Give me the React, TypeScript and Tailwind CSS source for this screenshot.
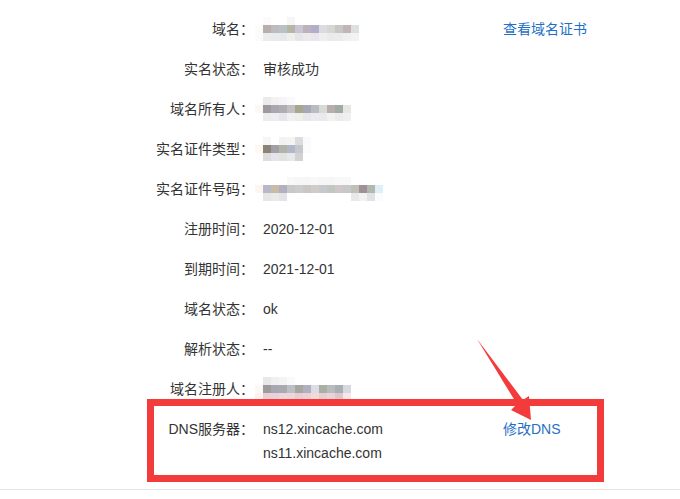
import type { ReactNode } from 'react'

// 打码块：每格 8x8，颜色按截图取样
function Mosaic({ grid }: { grid: string[][] }) {
  return (
    <div className="flex flex-col -ml-2">
      {grid.map((row, i) => (
        <div key={i} className="flex">
          {row.map((c, j) => (
            <div key={j} className="w-2 h-2" style={{ backgroundColor: c }} />
          ))}
        </div>
      ))}
    </div>
  )
}

const W = '#ffffff'

const ownerGrid = [
  [W, '#fbfbfb', W, W, '#f6f6f6', W, W, W, W, W, W, W, W],
  ['#fdfbf8', '#b8aeb0', '#bcbcbc', '#b9c0c6', '#b5b6a4', '#c9c5d2', '#bfb0bd', '#b0aec8', '#dcdbe3', '#d6d6d2', '#c9c6c6', '#c1b5b8', '#dde0e0'],
  ['#fbfbfb', '#ececec', '#eaeaea', '#e6e9ec', '#efefef', '#e6e6e8', '#eeeaec', '#e8e6ec', '#efefef', '#ebebeb', '#ececec', '#f0f0f0', '#f3f3f3'],
]

const holderGrid = [
  [W, '#ebebeb', '#f2f2f2', '#f5f5f7', '#fafafa', W, W, W, W, W, W, W],
  ['#fbf9f6', '#9e9a9c', '#aca6b0', '#adadb2', '#c0bfc2', '#a9a68f', '#a6a8b8', '#bcbcc0', '#d5dbd7', '#b7aeab', '#a3aaa6', '#e7e7e2'],
  [W, '#ececee', '#eeeef2', '#e6e6ea', '#f0f0f0', '#eeeeea', '#e8e8ec', '#ececf0', '#e8eaee', '#f2f2f2', '#ececec', '#f0f0f0'],
]

const typeGrid = [
  [W, '#f6f6f6', W, '#f2f2f2', '#f4f4f0', '#dcdcdc', '#fafafe'],
  ['#fdf8f2', '#8a8276', '#a39fa6', '#b0b4a9', '#b3b6c6', '#c6c9cc', '#fbfbfd'],
  [W, '#dcdcdc', '#e6e4e8', '#e2e2e2', '#e6e8ea', '#d2d2d2', W],
]

const idGrid = [
  [W, W, W, W, '#f8f8f8', '#f6f6f6', '#f6f6f6', '#f8f8f8', '#f6f6f6', '#f6f6f6', '#f8f8f8', '#f8f8f8', W, W, W, W],
  ['#fdf6ee', '#b8b8c8', '#c8bca8', '#b0b0c0', '#c8c8c8', '#cccccc', '#c8c8c8', '#d0ccc8', '#c8c8d0', '#c0c8c0', '#d0c8c8', '#c8c8c8', '#c0c0b8', '#a09098', '#b0b8b0', '#e0eef8'],
  [W, '#e6e6e6', '#eaeaea', '#e4e4e8', W, W, W, W, W, W, W, W, '#e8e8e8', '#f2f2f4', '#e2e2e2', '#fafcfe'],
]

const registrantGrid = [
  [W, '#e8e8e8', '#f0f0f2', '#f4f4f4', '#fafafa', W, W, W, W, W, W, W],
  ['#fbf8f6', '#9c9c9c', '#a8a6b0', '#a8aab0', '#bcc0c4', '#a8a6a0', '#b0b0c0', '#dcdce4', '#a8b0a4', '#b8bcbc', '#a8b0b4', '#d8d8e0'],
  ['#fdf2f2', '#e8d0d4', '#e4d4d8', '#ead8dc', '#ecd6da', '#e4d0d4', '#ead2d6', '#f0dcd4', '#e4d0d4', '#e8d4d8', '#dcc8cc', '#f6e8ea'],
]

type Row = { label: string; value: ReactNode; link?: string }

const rows: Row[] = [
  { label: '域名：', value: <Mosaic grid={ownerGrid} />, link: '查看域名证书' },
  { label: '实名状态：', value: '审核成功' },
  { label: '域名所有人：', value: <Mosaic grid={holderGrid} /> },
  { label: '实名证件类型：', value: <Mosaic grid={typeGrid} /> },
  { label: '实名证件号码：', value: <Mosaic grid={idGrid} /> },
  { label: '注册时间：', value: '2020-12-01' },
  { label: '到期时间：', value: '2021-12-01' },
  { label: '域名状态：', value: 'ok' },
  { label: '解析状态：', value: '--' },
  { label: '域名注册人：', value: <Mosaic grid={registrantGrid} /> },
]

export default function App() {
  return (
    <div className="relative w-[680px] h-[499px] bg-white overflow-hidden font-['Liberation_Sans','Noto_Sans_CJK_SC',sans-serif] text-[14px] text-[#333]">
      {/* 域名信息表 */}
      <div className="pt-[9px] pb-4 border-b border-[#e5e5e5]">
        {rows.map((row) => (
          <div key={row.label} className="flex h-10 items-center leading-6">
            <div className="w-[254px] shrink-0 text-right">{row.label}</div>
            <div className="ml-[9px] w-[240px] shrink-0">{row.value}</div>
            {row.link && <a className="text-[#1f6fc5] cursor-pointer">{row.link}</a>}
          </div>
        ))}

        {/* DNS 服务器 */}
        <div className="flex py-2 leading-6">
          <div className="w-[254px] shrink-0 text-right">DNS服务器：</div>
          <div className="ml-[9px] w-[240px] shrink-0 flex flex-col">
            <span>ns12.xincache.com</span>
            <span>ns11.xincache.com</span>
          </div>
          <a className="text-[#1f6fc5] cursor-pointer">修改DNS</a>
        </div>
      </div>

      {/* 标注：红框 + 箭头 */}
      <div className="absolute left-[147px] top-[399px] w-[457px] h-[83px] border-[7px] border-[#f43b3b] pointer-events-none" />
      <svg
        className="absolute left-0 top-0 pointer-events-none"
        width="680"
        height="499"
        viewBox="0 0 680 499"
        xmlns="http://www.w3.org/2000/svg"
      >
        <polygon
          points="477,339 523,400 529,396 531,420 511,410 517,404"
          fill="#f43b3b"
        />
      </svg>
    </div>
  )
}
